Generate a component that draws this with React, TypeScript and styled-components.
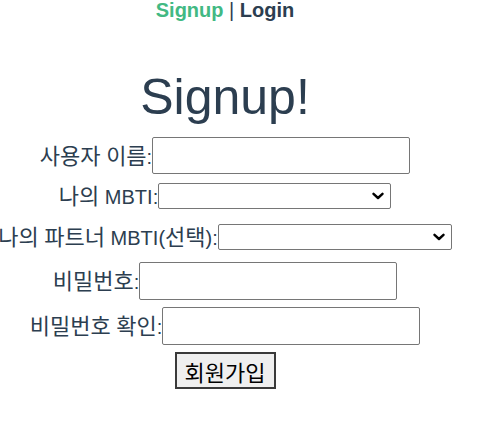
import React from "react";
import styled, { createGlobalStyle } from "styled-components";

const GlobalStyle = createGlobalStyle`
  html, body {
    margin: 0;
    padding: 0;
    background: #ffffff;
  }
  body {
    font-family: "Liberation Sans", Arial, "Noto Sans CJK KR", sans-serif;
    color: #2c3e50;
    -webkit-font-smoothing: antialiased;
  }
`;

const Page = styled.div`
  width: 450px;
  display: flex;
  flex-direction: column;
  align-items: center;
`;

const Nav = styled.nav`
  display: flex;
  align-items: center;
  height: 20px;
  line-height: 20px;
  font-size: 20px;
  white-space: pre;
`;

const NavLink = styled.a<{ $active?: boolean }>`
  color: ${(p) => (p.$active ? "#42b983" : "#2c3e50")};
  text-decoration: none;
  font-weight: bold;
`;

const Separator = styled.span`
  font-weight: normal;
  color: #2c3e50;
`;

const Title = styled.h1`
  margin: 52px 0 0;
  font-size: 50px;
  line-height: 50px;
  font-weight: normal;
  color: #2c3e50;
`;

const Form = styled.form`
  display: flex;
  flex-direction: column;
  align-items: center;
  margin-top: 15px;
  width: 100%;
`;

const Row = styled.div<{ $gap: number }>`
  display: flex;
  align-items: center;
  justify-content: center;
  width: 100%;
  margin-top: ${(p) => p.$gap}px;
  white-space: nowrap;
`;

const Label = styled.label`
  display: block;
  height: 26px;
  font-size: 20px;
  line-height: 26px;
  color: #2c3e50;
  flex: none;
`;

const Ko = styled.span`
  font-family: "Noto Sans CJK KR", sans-serif;
  font-size: 22px;
  line-height: 1;
`;

const TextInput = styled.input<{ $h: number }>`
  box-sizing: border-box;
  width: 258px;
  height: ${(p) => p.$h}px;
  border: 1px solid #767676;
  border-radius: 2px;
  background: #ffffff;
  padding: 1px 2px;
  margin: 0;
  flex: none;
  font-size: 16px;
`;

const SelectWrap = styled.div<{ $w: number }>`
  position: relative;
  width: ${(p) => p.$w}px;
  height: 26px;
  flex: none;
`;

const Select = styled.select`
  box-sizing: border-box;
  width: 100%;
  height: 100%;
  appearance: none;
  -webkit-appearance: none;
  border: 1px solid #767676;
  border-radius: 2px;
  background: #ffffff;
  margin: 0;
  padding: 0 4px;
  font-size: 14px;
`;

const Chevron = styled.svg`
  position: absolute;
  right: 7px;
  top: 50%;
  width: 12px;
  height: 8px;
  margin-top: -4px;
  pointer-events: none;
`;

const Submit = styled.button`
  box-sizing: border-box;
  margin-top: 7px;
  width: 101px;
  height: 37px;
  padding: 0 8px;
  background: #efefef;
  border: 2px solid #3a3a3a;
  border-radius: 0;
  font-family: "Noto Sans CJK KR", sans-serif;
  font-size: 22px;
  line-height: 26px;
  color: #000000;
`;

const ChevronIcon = () => (
  <Chevron viewBox="0 0 12 8">
    <path
      d="M1.5 1.8 L6 6 L10.5 1.8"
      fill="none"
      stroke="#000"
      strokeWidth="2.4"
      strokeLinecap="round"
      strokeLinejoin="round"
    />
  </Chevron>
);

export default function App() {
  return (
    <>
      <GlobalStyle />
      <Page>
        <Nav>
          <NavLink $active href="#">
            Signup
          </NavLink>
          <Separator>{" | "}</Separator>
          <NavLink href="#">Login</NavLink>
        </Nav>
        <Title>Signup!</Title>
        <Form onSubmit={(e) => e.preventDefault()}>
          <Row $gap={0}>
            <Label>
              <Ko>사용자</Ko> <Ko>이름</Ko>:
            </Label>
            <TextInput type="text" $h={37} />
          </Row>
          <Row $gap={9}>
            <Label>
              <Ko>나의</Ko> MBTI:
            </Label>
            <SelectWrap $w={233}>
              <Select defaultValue="">
                <option value=""></option>
              </Select>
              <ChevronIcon />
            </SelectWrap>
          </Row>
          <Row $gap={15}>
            <Label>
              <Ko>나의</Ko> <Ko>파트너</Ko> MBTI(<Ko>선택</Ko>):
            </Label>
            <SelectWrap $w={234}>
              <Select defaultValue="">
                <option value=""></option>
              </Select>
              <ChevronIcon />
            </SelectWrap>
          </Row>
          <Row $gap={12}>
            <Label>
              <Ko>비밀번호</Ko>:
            </Label>
            <TextInput type="password" $h={38} />
          </Row>
          <Row $gap={7}>
            <Label>
              <Ko>비밀번호</Ko> <Ko>확인</Ko>:
            </Label>
            <TextInput type="password" $h={38} />
          </Row>
          <Submit type="submit">회원가입</Submit>
        </Form>
      </Page>
    </>
  );
}
